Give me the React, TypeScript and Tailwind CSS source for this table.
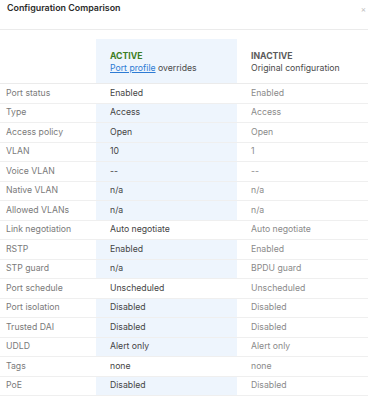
import React from 'react';

type Row = { label: string; active: string; inactive: string; hl: boolean };

const rows: Row[] = [
  { label: 'Port status', active: 'Enabled', inactive: 'Enabled', hl: false },
  { label: 'Type', active: 'Access', inactive: 'Access', hl: true },
  { label: 'Access policy', active: 'Open', inactive: 'Open', hl: true },
  { label: 'VLAN', active: '10', inactive: '1', hl: true },
  { label: 'Voice VLAN', active: '--', inactive: '--', hl: true },
  { label: 'Native VLAN', active: 'n/a', inactive: 'n/a', hl: true },
  { label: 'Allowed VLANs', active: 'n/a', inactive: 'n/a', hl: true },
  { label: 'Link negotiation', active: 'Auto negotiate', inactive: 'Auto negotiate', hl: false },
  { label: 'RSTP', active: 'Enabled', inactive: 'Enabled', hl: true },
  { label: 'STP guard', active: 'n/a', inactive: 'BPDU guard', hl: true },
  { label: 'Port schedule', active: 'Unscheduled', inactive: 'Unscheduled', hl: false },
  { label: 'Port isolation', active: 'Disabled', inactive: 'Disabled', hl: true },
  { label: 'Trusted DAI', active: 'Disabled', inactive: 'Disabled', hl: true },
  { label: 'UDLD', active: 'Alert only', inactive: 'Alert only', hl: true },
  { label: 'Tags', active: 'none', inactive: 'none', hl: false },
  { label: 'PoE', active: 'Disabled', inactive: 'Disabled', hl: true },
];

export default function App() {
  return (
    <div className="w-[368px] h-[400px] overflow-hidden bg-white font-['Inter',sans-serif] text-[8.7px]">
      {/* Modal header */}
      <div className="h-[30px] border-b border-[#ebebeb] flex items-start justify-between">
        <div className="pl-[7px] pt-[1px] text-[8.9px] font-semibold text-[#2b2b2b]">
          Configuration Comparison
        </div>
        <div className="pt-[5px] pr-[2px] text-[8px] text-[#bbb] leading-none">×</div>
      </div>

      <div className="mt-[9px] grid grid-cols-[96px_141px_1fr]">
        {/* column headers */}
        <div className="border-b border-[#ebebeb]" />
        <div className="bg-[#eef5fd] border-b border-[#ebebeb] h-[45px] pl-[14px] pt-[11px] leading-[12px]">
          <div className="font-bold text-[#3c7d23]">ACTIVE</div>
          <div className="text-[#4a4a4a]">
            <span className="text-[#2d7bd4] underline">Port profile</span> overrides
          </div>
        </div>
        <div className="border-b border-[#ebebeb] pl-[14px] pt-[11px] leading-[12px]">
          <div className="font-bold text-[#5a5a5a]">INACTIVE</div>
          <div className="text-[#4a4a4a]">Original configuration</div>
        </div>

        {rows.map((r) => (
          <React.Fragment key={r.label}>
            <div className="h-[19.5px] border-b border-[#efefef] pl-[6px] flex items-center text-[#7a7a7a]">
              {r.label}
            </div>
            <div
              className={`h-[19.5px] border-b border-[#efefef] pl-[14px] flex items-center text-[#444] ${
                r.hl ? 'bg-[#eef5fd]' : 'bg-white'
              }`}
            >
              {r.active}
            </div>
            <div className="h-[19.5px] border-b border-[#efefef] pl-[14px] flex items-center text-[#8a8a8a]">
              {r.inactive}
            </div>
          </React.Fragment>
        ))}
      </div>
    </div>
  );
}
